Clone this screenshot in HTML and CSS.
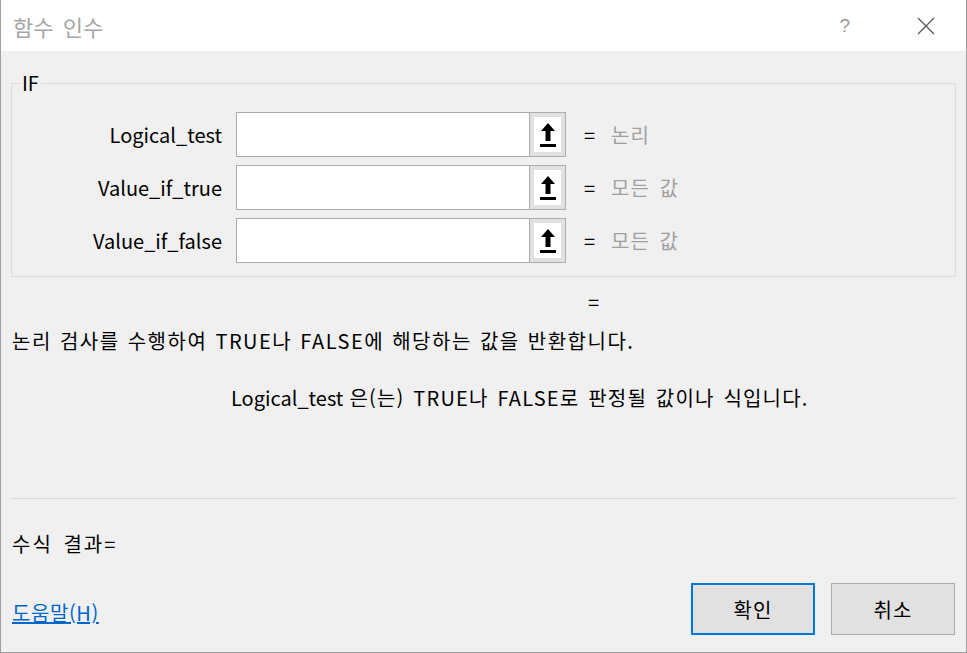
FILE: index.html
```html
<!DOCTYPE html>
<html lang="ko">
<head>
    <meta charset="UTF-8">
    <title>함수 인수</title>
    <link rel="stylesheet" href="styles.css">
</head>
<body>
    <div class="dialog">
        <header class="titlebar">
            <span class="title">함수 인수</span>
            <div class="title-buttons">
                <span class="help">?</span>
                <svg class="close" width="18" height="18" viewBox="0 0 18 18">
                    <path d="M1 1 L17 17 M17 1 L1 17" stroke="#555" stroke-width="1.2" fill="none"/>
                </svg>
            </div>
        </header>

        <main class="content">
            <fieldset class="args">
                <legend>IF</legend>
                <div class="arg-row">
                    <label>Logical_test</label>
                    <div class="input-wrap">
                        <input type="text">
                        <button class="ref-btn"><span class="ref-inner"><svg width="16" height="24" viewBox="0 0 16 24"><path d="M8 0 L15 8 L10.5 8 L10.5 18 L5.5 18 L5.5 8 L1 8 Z" fill="#000"/><rect x="0" y="21" width="16" height="3" fill="#000"/></svg></span></button>
                    </div>
                    <span class="eq">=</span>
                    <span class="hint">논리</span>
                </div>
                <div class="arg-row">
                    <label>Value_if_true</label>
                    <div class="input-wrap">
                        <input type="text">
                        <button class="ref-btn"><span class="ref-inner"><svg width="16" height="24" viewBox="0 0 16 24"><path d="M8 0 L15 8 L10.5 8 L10.5 18 L5.5 18 L5.5 8 L1 8 Z" fill="#000"/><rect x="0" y="21" width="16" height="3" fill="#000"/></svg></span></button>
                    </div>
                    <span class="eq">=</span>
                    <span class="hint">모든 값</span>
                </div>
                <div class="arg-row">
                    <label>Value_if_false</label>
                    <div class="input-wrap">
                        <input type="text">
                        <button class="ref-btn"><span class="ref-inner"><svg width="16" height="24" viewBox="0 0 16 24"><path d="M8 0 L15 8 L10.5 8 L10.5 18 L5.5 18 L5.5 8 L1 8 Z" fill="#000"/><rect x="0" y="21" width="16" height="3" fill="#000"/></svg></span></button>
                    </div>
                    <span class="eq">=</span>
                    <span class="hint">모든 값</span>
                </div>
            </fieldset>

            <div class="result-eq">=</div>
            <p class="desc">논리 검사를 수행하여 TRUE나 FALSE에 해당하는 값을 반환합니다.</p>
            <p class="arg-desc"><span class="arg-name">Logical_test</span><span class="arg-text">은(는) TRUE나 FALSE로 판정될 값이나 식입니다.</span></p>

            <hr class="sep">

            <div class="formula">수식 결과=</div>

            <div class="footer">
                <a href="#" class="help-link">도움말(H)</a>
                <div class="actions">
                    <button class="btn btn-default">확인</button>
                    <button class="btn">취소</button>
                </div>
            </div>
        </main>
    </div>
</body>
</html>
```

FILE: styles.css
```css
html, body {
    margin: 0;
    padding: 0;
    height: 100%;
    font-family: "Noto Sans CJK KR", "Noto Sans", sans-serif;
    font-size: 20px;
    word-spacing: 3px;
    color: #000;
}

.dialog {
    width: 967px;
    height: 653px;
    box-sizing: border-box;
    border: 1px solid #a0a0a0;
    border-top: none;
    background-color: #f0f0f0;
    display: flex;
    flex-direction: column;
}

.titlebar {
    height: 51px;
    background-color: #fff;
    display: flex;
    justify-content: space-between;
    align-items: center;
    padding-left: 12px;
    flex-shrink: 0;
}

.title {
    color: #a6a6a6;
    font-size: 22px;
}

.title-buttons {
    display: flex;
    align-items: center;
}

.help {
    color: #999;
    font-size: 19px;
    margin-right: 67px;
    font-family: "Liberation Sans", sans-serif;
}

.close {
    margin-right: 31px;
}

.content {
    flex-grow: 1;
    padding: 0 10px 0 10px;
    display: flex;
    flex-direction: column;
}

.args {
    margin: 22px 0 0 0;
    padding: 19px 0 13px 0;
    border: 1px solid #dcdcdc;
    display: flex;
    flex-direction: column;
    gap: 8px;
}

.args legend {
    padding: 0 2px;
    margin-left: 8px;
    font-size: 20px;
    line-height: 20px;
}

.arg-row {
    display: flex;
    align-items: center;
    height: 45px;
}

.arg-row label {
    width: 210px;
    text-align: right;
    margin-right: 14px;
}

.input-wrap {
    display: flex;
    height: 45px;
}

.input-wrap input {
    width: 293px;
    height: 45px;
    box-sizing: border-box;
    border: 1px solid #ababab;
    border-right: none;
    background: #fff;
    margin: 0;
    padding: 0 4px;
    outline: none;
}

.ref-btn {
    width: 37px;
    height: 45px;
    box-sizing: border-box;
    border: 1px solid #adadad;
    background-color: #e1e1e1;
    padding: 4px;
    margin: 0;
    display: flex;
}

.ref-inner {
    flex-grow: 1;
    background-color: #fff;
    display: flex;
    align-items: center;
    justify-content: center;
}

.eq {
    margin-left: 18px;
    width: 27px;
}

.hint {
    color: #a0a0a0;
    letter-spacing: 1px;
}

.result-eq {
    margin: 12px 0 0 577px;
    line-height: 26px;
}

.desc {
    margin: 13px 0 0 1px;
    line-height: 26px;
    letter-spacing: 1.5px;
    word-spacing: 1px;
}

.arg-desc {
    margin: 31px 0 0 220px;
    line-height: 26px;
}

.arg-name {
    margin-right: 6px;
}

.arg-text {
    letter-spacing: 1.2px;
    word-spacing: 2px;
}

.sep {
    border: none;
    border-top: 1px solid #d9d9d9;
    margin: 87px 0 0 0;
    height: 0;
}

.formula {
    margin: 32px 0 0 1px;
    line-height: 26px;
    letter-spacing: 2px;
}

.footer {
    display: flex;
    justify-content: space-between;
    align-items: center;
    margin-top: 26px;
}

.help-link {
    color: #0066cc;
    margin-left: 1px;
    margin-top: 6px;
    letter-spacing: 0.6px;
}

.actions {
    display: flex;
    gap: 16px;
    margin-right: 1px;
}

.btn {
    width: 124px;
    height: 52px;
    box-sizing: border-box;
    border: 1px solid #adadad;
    background-color: #e1e1e1;
    font-family: inherit;
    font-size: 20px;
    letter-spacing: 1px;
    color: #000;
}

.btn-default {
    border: 2px solid #0078d7;
}
```
